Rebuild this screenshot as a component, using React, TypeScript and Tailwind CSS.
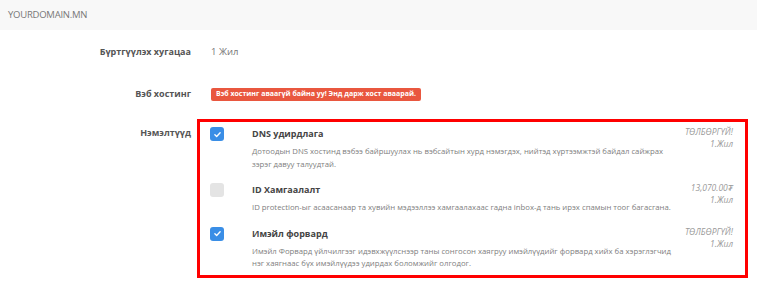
import React from 'react';

type Addon = {
    title: string;
    lines: string[];
    price: string;
    checked: boolean;
};

const addons: Addon[] = [
    {
        title: 'DNS удирдлага',
        lines: [
            'Дотоодын DNS хостинд вэбээ байршуулах нь вэбсайтын хурд нэмэгдэх, нийтэд хүртээмжтэй байдал сайжрах',
            'зэрэг давуу талуудтай.',
        ],
        price: 'ТӨЛБӨРГҮЙ!',
        checked: true,
    },
    {
        title: 'ID Хамгаалалт',
        lines: [
            'ID protection-ыг асаасанаар та хувийн мэдээллээ хамгаалахаас гадна inbox-д тань ирэх спамын тоог багасгана.',
        ],
        price: '13,070.00₮',
        checked: false,
    },
    {
        title: 'Имэйл форвард',
        lines: [
            'Имэйл Форвард үйлчилгээг идэвхжүүлснээр таны сонгосон хаягруу имэйлүүдийг форвард хийх ба хэрэглэгчид',
            'нэг хаягнаас бүх имэйлүүдээ удирдах боломжийг олгодог.',
        ],
        price: 'ТӨЛБӨРГҮЙ!',
        checked: true,
    },
];

const CheckBox: React.FC<{ checked: boolean }> = ({ checked }) => (
    <div
        className={`w-[14px] h-[14px] rounded-[3px] flex items-center justify-center shrink-0 ${
            checked ? 'bg-[#3a8ee6]' : 'bg-[#e4e4e4]'
        }`}
    >
        {checked && (
            <svg width="9" height="9" viewBox="0 0 12 12" fill="none">
                <path d="M2.5 6.2l2.4 2.4 4.6-5" stroke="#fff" strokeWidth="1.8" strokeLinecap="round" strokeLinejoin="round" />
            </svg>
        )}
    </div>
);

const App: React.FC = () => {
    return (
        <div className="w-[757px] h-[287px] bg-white overflow-hidden" style={{ fontFamily: '"Open Sans", sans-serif' }}>
            <div className="h-[30px] bg-[#f8f8f8] px-2 flex items-center text-[9.5px] text-[#777] tracking-tight">
                YOURDOMAIN.MN
            </div>

            <div className="flex items-center h-[20px] mt-[12px]">
                <div className="w-[191px] text-right text-[9px] font-bold text-[#555]">Бүртгүүлэх хугацаа</div>
                <div className="ml-[20px] text-[9.5px] text-[#777]">1 Жил</div>
            </div>

            <div className="flex items-center h-[20px] mt-[22px]">
                <div className="w-[191px] text-right text-[9px] font-bold text-[#555]">Вэб хостинг</div>
                <div className="ml-[20px] h-[13px] px-[5px] rounded-[2px] bg-[#e9573f] text-white text-[7px] font-bold flex items-center whitespace-nowrap">
                    Вэб хостинг аваагүй байна уу! Энд дарж хост аваарай.
                </div>
            </div>

            <div className="flex mt-[15px]">
                <div className="w-[191px] text-right text-[9px] font-bold text-[#555] pt-[7px] leading-[14px]">Нэмэлтүүд</div>
                <div className="ml-[6px] w-[551px] h-[159px] border-[3px] border-[#ff0000] pt-[5px] pl-[10px] pr-[12px] flex flex-col gap-[13px]">
                    {addons.map((a) => (
                        <div key={a.title} className="flex">
                            <CheckBox checked={a.checked} />
                            <div className="ml-[28px] flex-1">
                                <div className="text-[9px] font-bold text-[#444] leading-[14px]">{a.title}</div>
                                <div className="mt-[4px] text-[7.75px] text-[#808080] leading-[12.5px] whitespace-nowrap">
                                    {a.lines.map((l) => (
                                        <div key={l}>{l}</div>
                                    ))}
                                </div>
                            </div>
                            <div className="text-right italic text-[8.5px] text-[#9a9a9a] leading-[12px] -mt-[1px] whitespace-nowrap">
                                <div>{a.price}</div>
                                <div>1.Жил</div>
                            </div>
                        </div>
                    ))}
                </div>
            </div>
        </div>
    );
};

export default App;
